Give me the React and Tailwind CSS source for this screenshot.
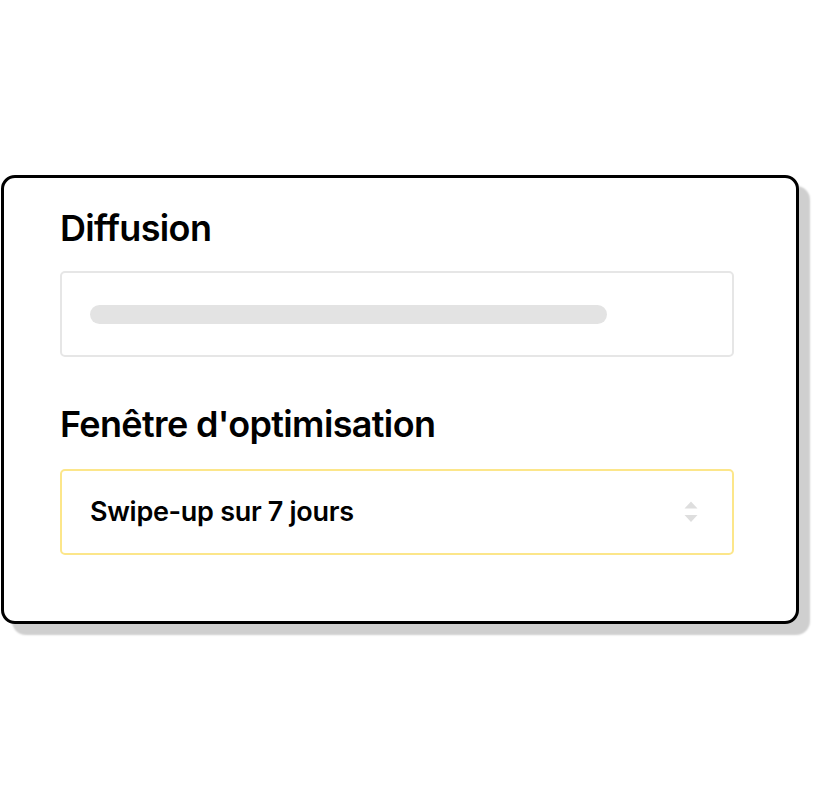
import React from 'react';

const SortArrows = () => (
  <svg width="14" height="22" viewBox="0 0 14 22" fill="#dedede">
    <path d="M7 0.5 L13.5 7.5 L0.5 7.5 Z" />
    <path d="M0.5 14 L13.5 14 L7 21 Z" />
  </svg>
);

const App = () => {
  return (
    <div className="w-[814px] h-[800px] bg-white pt-[175px] pl-[1px]" style={{ fontFamily: 'Inter, "Liberation Sans", sans-serif' }}>
      <div className="w-[798px] h-[449px] border-[3px] border-black rounded-[14px] bg-white shadow-[11px_11px_2px_#cfcfcf] pl-[56px] pr-[62px] pt-[26px]">
        <h2 className="text-[36px] leading-[48px] font-semibold text-black tracking-[-0.65px]">Diffusion</h2>
        <div className="mt-[19px] h-[86px] border-2 border-[#e6e6e6] rounded-[5px] flex items-center pl-[28px]">
          <div className="w-[517px] h-[19px] rounded-full bg-[#e3e3e3]" />
        </div>
        <h2 className="mt-[43px] text-[36px] leading-[48px] font-semibold text-black tracking-[-0.65px]">Fenêtre d'optimisation</h2>
        <div className="mt-[21px] h-[86px] border-2 border-[#fce68a] rounded-[5px] flex items-center justify-between pl-[28px] pr-[34px]">
          <span className="text-[27px] font-semibold text-black tracking-[-0.3px]">Swipe-up sur 7 jours</span>
          <SortArrows />
        </div>
      </div>
    </div>
  );
};

export default App;
